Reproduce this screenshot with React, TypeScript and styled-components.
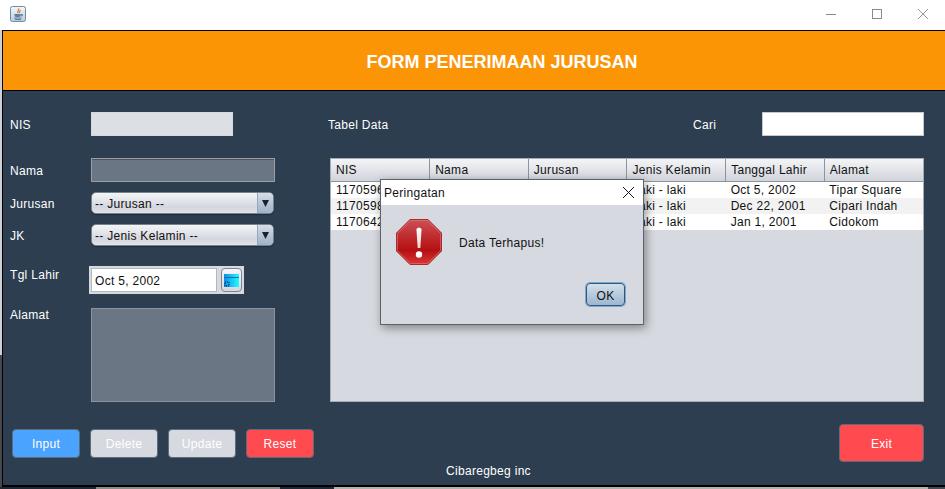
import React from "react"
import styled, { createGlobalStyle } from "styled-components"

const GlobalStyle = createGlobalStyle`
	html, body {
		margin: 0;
		padding: 0;
		background: #fff;
	}
	* {
		box-sizing: border-box;
	}
`

const Window = styled.div`
	position: relative;
	width: 945px;
	height: 489px;
	overflow: hidden;
	display: flex;
	flex-direction: column;
	background: linear-gradient(#cdd1d6 0, #cdd1d6 355px, #45484c 355px);
	font-family: "Liberation Sans", Arial, sans-serif;
	font-size: 12px;
	letter-spacing: 0.3px;
`

const TitleBar = styled.div`
	height: 30px;
	flex: none;
	display: flex;
	align-items: center;
	padding: 0 17px 2px 10px;
	background: #fff;
`

const WindowControls = styled.div`
	margin-left: auto;
	display: flex;
	align-items: center;
	gap: 36px;
`

const Frame = styled.div`
	flex: 1;
	margin-left: 2px;
	display: flex;
	flex-direction: column;
	border-top: 1px solid #000;
	border-left: 1px solid #000;
	border-bottom: 2px solid #000;
`

const DesktopStrip = styled.div`
	height: 2px;
	flex: none;
	background: linear-gradient(
		to right,
		#1c2733 0,
		#1c2733 96px,
		#8a8a8a 96px,
		#8a8a8a 280px,
		#1c2733 280px,
		#1c2733 334px,
		#b0b0b0 334px,
		#b0b0b0 928px,
		#45484c 928px
	);
`

const Banner = styled.div`
	height: 59px;
	flex: none;
	display: flex;
	align-items: center;
	justify-content: center;
	padding: 4px 0 0 56px;
	background: #fb9506;
	color: #fff;
	font-size: 18px;
	font-weight: bold;
	letter-spacing: 0;
`

const Body = styled.div`
	flex: 1;
	display: flex;
	flex-direction: column;
	padding-top: 21px;
	background: #2c3e50;
	border-top: 1px solid #000;
	color: #fff;
`

const Columns = styled.div`
	display: flex;
	height: 291px;
`

const LeftColumn = styled.div`
	width: 327px;
	flex: none;
	display: flex;
	flex-direction: column;
	padding-left: 7px;
`

const FormRow = styled.div<{ $top?: number; $height: number; $align?: string }>`
	display: flex;
	align-items: ${(p) => p.$align || "center"};
	height: ${(p) => p.$height}px;
	margin-top: ${(p) => p.$top || 0}px;
`

const Label = styled.div<{ $flush?: boolean }>`
	width: 81px;
	flex: none;
	padding-top: ${(p) => (p.$flush ? 0 : 2)}px;
	line-height: 14px;
	white-space: nowrap;
`

const TextField = styled.div<{ $width: number; $disabled?: boolean; $dim?: boolean }>`
	width: ${(p) => p.$width}px;
	height: 24px;
	flex: none;
	background: ${(p) => (p.$disabled ? "#dcdfe4" : p.$dim ? "#6b7684" : "#fff")};
	border: 1px solid ${(p) => (p.$disabled ? "#d6d9df" : p.$dim ? "#9a9fa6" : "#c4c7cc")};
	box-shadow: ${(p) => (p.$dim ? "inset 0 1px 0 #4d5560" : "none")};
`

const Combo = styled.div`
	width: 183px;
	height: 22px;
	flex: none;
	display: flex;
	overflow: hidden;
	border-radius: 5px;
	border: 1px solid #76838f;
	box-shadow: 0 1px 1px #1f2c3a;
	color: #111;
	background: linear-gradient(#f4f5f7 0%, #dfe2e8 45%, #d3d6de 70%, #e3e5ea 100%);
`

const ComboText = styled.div`
	flex: 1;
	padding: 1px 0 0 3px;
	line-height: 20px;
`

const ComboArrow = styled.div`
	width: 16px;
	flex: none;
	display: flex;
	align-items: center;
	justify-content: center;
	background: linear-gradient(#d4deea 0%, #b7c6d8 50%, #9fb3c9 100%);
	border-left: 1px solid #9aa5b3;
`

const DatePicker = styled.div`
	width: 155px;
	height: 28px;
	margin-left: -2px;
	flex: none;
	display: flex;
	align-items: center;
	padding: 0 2px;
	gap: 4px;
	background: #d6d9df;
`

const DateField = styled.div`
	width: 126px;
	height: 24px;
	padding-left: 3px;
	background: #fff;
	border: 1px solid #b4b7bd;
	color: #111;
	line-height: 25px;
`

const DateButton = styled.div`
	width: 21px;
	height: 24px;
	display: flex;
	align-items: center;
	justify-content: center;
	border: 1px solid #7f858d;
	border-radius: 4px;
	background: linear-gradient(#f6f7f9, #d3d7de);
`

const TextArea = styled.div`
	width: 184px;
	height: 94px;
	flex: none;
	background: #6b7684;
	border: 1px solid #8b939e;
`

const RightColumn = styled.div`
	flex: 1;
	display: flex;
	flex-direction: column;
	padding-right: 21px;
`

const SearchRow = styled.div`
	display: flex;
	align-items: center;
	height: 24px;
	margin-left: -2px;
`

const SearchTitle = styled.div`
	padding-top: 2px;
`

const SearchLabel = styled.div`
	margin-left: auto;
	width: 69px;
	padding-top: 2px;
`

const TableBox = styled.div`
	height: 244px;
	margin-top: 22px;
	background: #d6d9df;
	border: 1px solid #a7abb2;
`

const DataTable = styled.table`
	width: 100%;
	border-collapse: collapse;
	table-layout: fixed;
	color: #111;
`

const HeadCell = styled.th`
	height: 22px;
	padding: 0 0 0 5px;
	text-align: left;
	font-weight: normal;
	background: linear-gradient(#f3f4f6 0%, #e2e4e9 50%, #d0d3da 100%);
	border-right: 1px solid #8f949c;
	border-bottom: 1px solid #8f949c;
	white-space: nowrap;
	overflow: hidden;
	&:last-child {
		border-right: 0;
	}
`

const Row = styled.tr<{ $alt?: boolean }>`
	height: 16px;
	background: ${(p) => (p.$alt ? "#f2f2f2" : "#fff")};
`

const Cell = styled.td`
	padding: 1px 0 0 5px;
	line-height: 15px;
	white-space: nowrap;
	overflow: hidden;
`

const ActionBar = styled.div`
	height: 38px;
	margin-top: 21px;
	flex: none;
	display: flex;
	align-items: center;
	gap: 10px;
	padding: 0 21px 0 9px;
`

const ActionButton = styled.button<{ $color: string; $wide?: boolean }>`
	width: ${(p) => (p.$wide ? 85 : 68)}px;
	height: ${(p) => (p.$wide ? 38 : 29)}px;
	margin-left: ${(p) => (p.$wide ? "auto" : 0)};
	padding: 1px 0 0;
	border: 1px solid #5e6b79;
	border-radius: 4px;
	background: ${(p) => p.$color};
	color: #fff;
	font-family: inherit;
	font-size: 12px;
	letter-spacing: inherit;
`

const Footer = styled.div`
	padding: 2px 0 0 443px;
	line-height: 14px;
`

const Dialog = styled.div`
	position: absolute;
	left: 380px;
	top: 179px;
	width: 264px;
	height: 146px;
	display: flex;
	flex-direction: column;
	background: #d6d9df;
	border: 1px solid #5d636b;
	box-shadow: 2px 3px 9px rgba(0, 0, 0, 0.4);
	color: #111;
`

const DialogTitle = styled.div`
	height: 25px;
	flex: none;
	display: flex;
	align-items: center;
	justify-content: space-between;
	padding: 0 9px 0 3px;
	background: #fff;
`

const DialogBody = styled.div`
	display: flex;
	align-items: center;
	gap: 17px;
	padding: 14px 0 0 15px;
`

const DialogMessage = styled.div`
	padding-top: 2px;
`

const DialogFooter = styled.div`
	display: flex;
	justify-content: flex-end;
	padding: 18px 18px 0 0;
`

const OkButton = styled.button`
	width: 39px;
	height: 23px;
	padding: 2px 0 0;
	border: 1px solid #2c5a85;
	border-radius: 4px;
	background: linear-gradient(#d3dfeb 0%, #b7cadd 50%, #9db7d0 100%);
	box-shadow: 0 0 0 1px #7fa7cc;
	color: #111;
	font-family: inherit;
	font-size: 12px;
	letter-spacing: inherit;
`

const JavaIcon = () => (
	<svg width="16" height="16" viewBox="0 0 16 16">
		<defs>
			<linearGradient id="javaBg" x1="0" y1="0" x2="0" y2="1">
				<stop offset="0" stopColor="#f4f7fa" />
				<stop offset="1" stopColor="#b9cbdd" />
			</linearGradient>
		</defs>
		<rect x="0.5" y="0.5" width="15" height="15" rx="2" fill="url(#javaBg)" stroke="#6f8aa5" />
		<path d="M8.5 2.5C10 4 6.5 5 8 7M10 4C10.5 5 9 5.5 9.5 7" stroke="#e2702a" strokeWidth="1.2" fill="none" />
		<path d="M4.5 8H10.5V9.5C10.5 10.5 9.5 11 7.5 11C5.5 11 4.5 10.5 4.5 9.5Z" fill="#5f7f9f" />
		<path d="M10.5 8.5H12.5V9.8H10.5M4 12H11.5M5 13.5H11" stroke="#5f7f9f" fill="none" />
	</svg>
)

const MinimizeIcon = () => (
	<svg width="10" height="10" viewBox="0 0 10 10">
		<path d="M0 5.5H10" stroke="#8a8a8a" />
	</svg>
)

const MaximizeIcon = () => (
	<svg width="10" height="10" viewBox="0 0 10 10">
		<rect x="0.5" y="0.5" width="9" height="9" fill="none" stroke="#8a8a8a" />
	</svg>
)

const CloseIcon = ({ size, color }: { size: number; color: string }) => (
	<svg width={size} height={size} viewBox="0 0 10 10">
		<path d="M0 0L10 10M10 0L0 10" stroke={color} strokeWidth={10 / size} fill="none" />
	</svg>
)

const ArrowIcon = () => (
	<svg width="7" height="7" viewBox="0 0 7 7">
		<path d="M0 0H7L3.5 7Z" fill="#1d2228" />
	</svg>
)

const CalendarIcon = () => (
	<svg width="15" height="13" viewBox="0 0 15 13">
		<defs>
			<linearGradient id="calBg" x1="0" y1="0" x2="1" y2="0">
				<stop offset="0" stopColor="#0a8ef0" />
				<stop offset="1" stopColor="#22fbfb" />
			</linearGradient>
		</defs>
		<rect width="15" height="13" fill="url(#calBg)" />
		<rect y="3" width="15" height="1" fill="#2a6a9a" />
		<rect x="1" y="8" width="4" height="4" fill="none" stroke="#04121c" strokeDasharray="1 1" />
	</svg>
)

const ErrorIcon = () => (
	<svg width="46" height="46" viewBox="0 0 46 46">
		<defs>
			<linearGradient id="stopBg" x1="0" y1="0" x2="0" y2="1">
				<stop offset="0" stopColor="#cc5055" />
				<stop offset="0.68" stopColor="#b51011" />
				<stop offset="1" stopColor="#d93636" />
			</linearGradient>
			<linearGradient id="bangBg" x1="0" y1="0" x2="0" y2="1">
				<stop offset="0" stopColor="#ffffff" />
				<stop offset="1" stopColor="#f0d8d8" />
			</linearGradient>
		</defs>
		<path d="M14 0.5H32L45.5 14V32L32 45.5H14L0.5 32V14Z" fill="url(#stopBg)" stroke="#a82a2c" />
		<path d="M14.5 1.5H31.5L44.5 14.5V31.5L31.5 44.5H14.5L1.5 31.5V14.5Z" fill="none" stroke="#e08080" strokeOpacity="0.55" />
		<path d="M20.4 10Q23 6.8 25.6 10L24.3 29H21.7Z" fill="url(#bangBg)" />
		<circle cx="23" cy="35.5" r="3.2" fill="#fff" />
	</svg>
)

const columns = ["NIS", "Nama", "Jurusan", "Jenis Kelamin", "Tanggal Lahir", "Alamat"]

const rows = [
	{ nis: "1170596", jk: "Laki - laki", lahir: "Oct 5, 2002", alamat: "Tipar Square" },
	{ nis: "1170598", jk: "Laki - laki", lahir: "Dec 22, 2001", alamat: "Cipari Indah" },
	{ nis: "1170642", jk: "Laki - laki", lahir: "Jan 1, 2001", alamat: "Cidokom" },
]

const App: React.FunctionComponent = () => (
	<Window>
		<GlobalStyle />
		<TitleBar>
			<JavaIcon />
			<WindowControls>
				<MinimizeIcon />
				<MaximizeIcon />
				<CloseIcon size={10} color="#999" />
			</WindowControls>
		</TitleBar>
		<Frame>
			<Banner>FORM PENERIMAAN JURUSAN</Banner>
			<Body>
				<Columns>
					<LeftColumn>
						<FormRow $height={24}>
							<Label>NIS</Label>
							<TextField $width={142} $disabled />
						</FormRow>
						<FormRow $height={24} $top={22}>
							<Label>Nama</Label>
							<TextField $width={184} $dim />
						</FormRow>
						<FormRow $height={22} $top={10}>
							<Label>Jurusan</Label>
							<Combo>
								<ComboText>-- Jurusan --</ComboText>
								<ComboArrow>
									<ArrowIcon />
								</ComboArrow>
							</Combo>
						</FormRow>
						<FormRow $height={22} $top={10}>
							<Label>JK</Label>
							<Combo>
								<ComboText>-- Jenis Kelamin --</ComboText>
								<ComboArrow>
									<ArrowIcon />
								</ComboArrow>
							</Combo>
						</FormRow>
						<FormRow $height={28} $top={20} $align="flex-start">
							<Label>Tgl Lahir</Label>
							<DatePicker>
								<DateField>Oct 5, 2002</DateField>
								<DateButton>
									<CalendarIcon />
								</DateButton>
							</DatePicker>
						</FormRow>
						<FormRow $height={94} $top={14} $align="flex-start">
							<Label $flush>Alamat</Label>
							<TextArea />
						</FormRow>
					</LeftColumn>
					<RightColumn>
						<SearchRow>
							<SearchTitle>Tabel Data</SearchTitle>
							<SearchLabel>Cari</SearchLabel>
							<TextField $width={162} />
						</SearchRow>
						<TableBox>
							<DataTable>
								<thead>
									<tr>
										{columns.map((name) => (
											<HeadCell key={name}>{name}</HeadCell>
										))}
									</tr>
								</thead>
								<tbody>
									{rows.map((row, i) => (
										<Row key={row.nis} $alt={i === 1}>
											<Cell>{row.nis}</Cell>
											<Cell />
											<Cell />
											<Cell>{row.jk}</Cell>
											<Cell>{row.lahir}</Cell>
											<Cell>{row.alamat}</Cell>
										</Row>
									))}
								</tbody>
							</DataTable>
						</TableBox>
					</RightColumn>
				</Columns>
				<ActionBar>
					<ActionButton $color="#4aa3ff">Input</ActionButton>
					<ActionButton $color="#d6d9df">Delete</ActionButton>
					<ActionButton $color="#d6d9df">Update</ActionButton>
					<ActionButton $color="#ff4b4f">Reset</ActionButton>
					<ActionButton $color="#ff4b4f" $wide>
						Exit
					</ActionButton>
				</ActionBar>
				<Footer>Cibaregbeg inc</Footer>
			</Body>
		</Frame>
		<DesktopStrip />
		<Dialog>
			<DialogTitle>
				Peringatan
				<CloseIcon size={11} color="#111" />
			</DialogTitle>
			<DialogBody>
				<ErrorIcon />
				<DialogMessage>Data Terhapus!</DialogMessage>
			</DialogBody>
			<DialogFooter>
				<OkButton>OK</OkButton>
			</DialogFooter>
		</Dialog>
	</Window>
)

export default App
